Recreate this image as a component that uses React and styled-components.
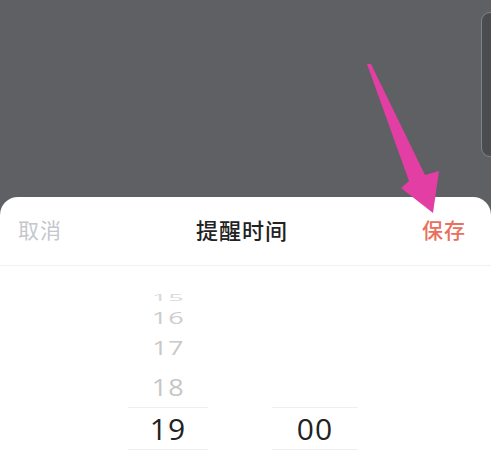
import React from 'react';
import styled, { createGlobalStyle } from 'styled-components';

const GlobalStyle = createGlobalStyle`
  html, body {
    margin: 0;
    padding: 0;
    background: #5f6064;
  }
  #root {
    height: 460px;
  }
`;

const hourItems = [
  { label: '15', height: 16, sy: 0.3, sx: 0.9, color: '#d9d9d9' },
  { label: '16', height: 24, sy: 0.52, sx: 0.9, color: '#cdcdcd' },
  { label: '17', height: 36, sy: 0.64, sx: 0.88, color: '#c8c8c8' },
  { label: '18', height: 41, sy: 0.8, sx: 0.9, color: '#c6c6c6' },
];

const App = () => {
  return (
    <Page>
      <GlobalStyle />
      <Backdrop>
        <SideWindow />
      </Backdrop>

      <Sheet>
        <Header>
          <Cancel>取消</Cancel>
          <Title>提醒时间</Title>
          <Save>保存</Save>
        </Header>

        <PickerBody>
          <Wheel $width={80}>
            {hourItems.map((item) => (
              <WheelRow key={item.label} $height={item.height}>
                <WheelText $sx={item.sx} $sy={item.sy} $color={item.color}>
                  {item.label}
                </WheelText>
              </WheelRow>
            ))}
            <Selected>19</Selected>
          </Wheel>
          <Wheel $width={86} $top={117}>
            <Selected>00</Selected>
          </Wheel>
        </PickerBody>
      </Sheet>

      <Arrow viewBox="0 0 491 460" width="491" height="460">
        <polygon
          points="367,64 371,64 425,175 439,171 433,213 401,188 409,181"
          fill="#e23ea4"
        />
      </Arrow>
    </Page>
  );
};

const Page = styled.div`
  position: relative;
  height: 460px;
  display: flex;
  flex-direction: column;
  overflow: hidden;
  font-family: "Noto Sans CJK SC", "Open Sans", sans-serif;
`;

const Backdrop = styled.div`
  height: 197px;
  display: flex;
  justify-content: flex-end;
  align-items: flex-start;
  padding-top: 12px;
  box-sizing: border-box;
`;

const SideWindow = styled.div`
  width: 22px;
  height: 143px;
  margin-right: -14px;
  background: #4b4c50;
  border: 1px solid #828387;
  border-radius: 9px;
`;

const Sheet = styled.div`
  flex: 1;
  background: #fff;
  border-radius: 18px 18px 0 0;
  display: flex;
  flex-direction: column;
`;

const Header = styled.div`
  height: 69px;
  display: grid;
  grid-template-columns: 1fr auto 1fr;
  align-items: center;
  padding: 0 25px 4px 18px;
  box-sizing: border-box;
  border-bottom: 1px solid #f1f1f3;
  font-size: 21px;
`;

const Cancel = styled.span`
  color: #c5c7cc;
  justify-self: start;
  letter-spacing: 1px;
`;

const Title = styled.span`
  color: #222;
  font-size: 22px;
  font-weight: 500;
  letter-spacing: 1px;
`;

const Save = styled.span`
  color: #e8705c;
  font-weight: 500;
  justify-self: end;
  letter-spacing: 1px;
`;

const PickerBody = styled.div`
  flex: 1;
  display: flex;
  align-items: flex-start;
  gap: 64px;
  padding-left: 128px;
  padding-top: 24px;
  overflow: hidden;
`;

const Wheel = styled.div`
  width: ${(p) => p.$width}px;
  margin-top: ${(p) => p.$top || 0}px;
  display: flex;
  flex-direction: column;
`;

const WheelRow = styled.div`
  height: ${(p) => p.$height}px;
  display: flex;
  align-items: center;
  justify-content: center;
`;

const WheelText = styled.span`
  font-family: "Open Sans", sans-serif;
  font-size: 30px;
  line-height: 1;
  color: ${(p) => p.$color};
  transform: scale(${(p) => p.$sx}, ${(p) => p.$sy});
  letter-spacing: 1px;
`;

const Selected = styled.div`
  height: 43px;
  box-sizing: border-box;
  border-top: 1px solid #efeff1;
  border-bottom: 1px solid #efeff1;
  display: flex;
  align-items: center;
  justify-content: center;
  font-family: "Open Sans", sans-serif;
  font-size: 30px;
  color: #222;
  letter-spacing: 1px;
`;

const Arrow = styled.svg`
  position: absolute;
  top: 0;
  left: 0;
  pointer-events: none;
`;

export default App;
